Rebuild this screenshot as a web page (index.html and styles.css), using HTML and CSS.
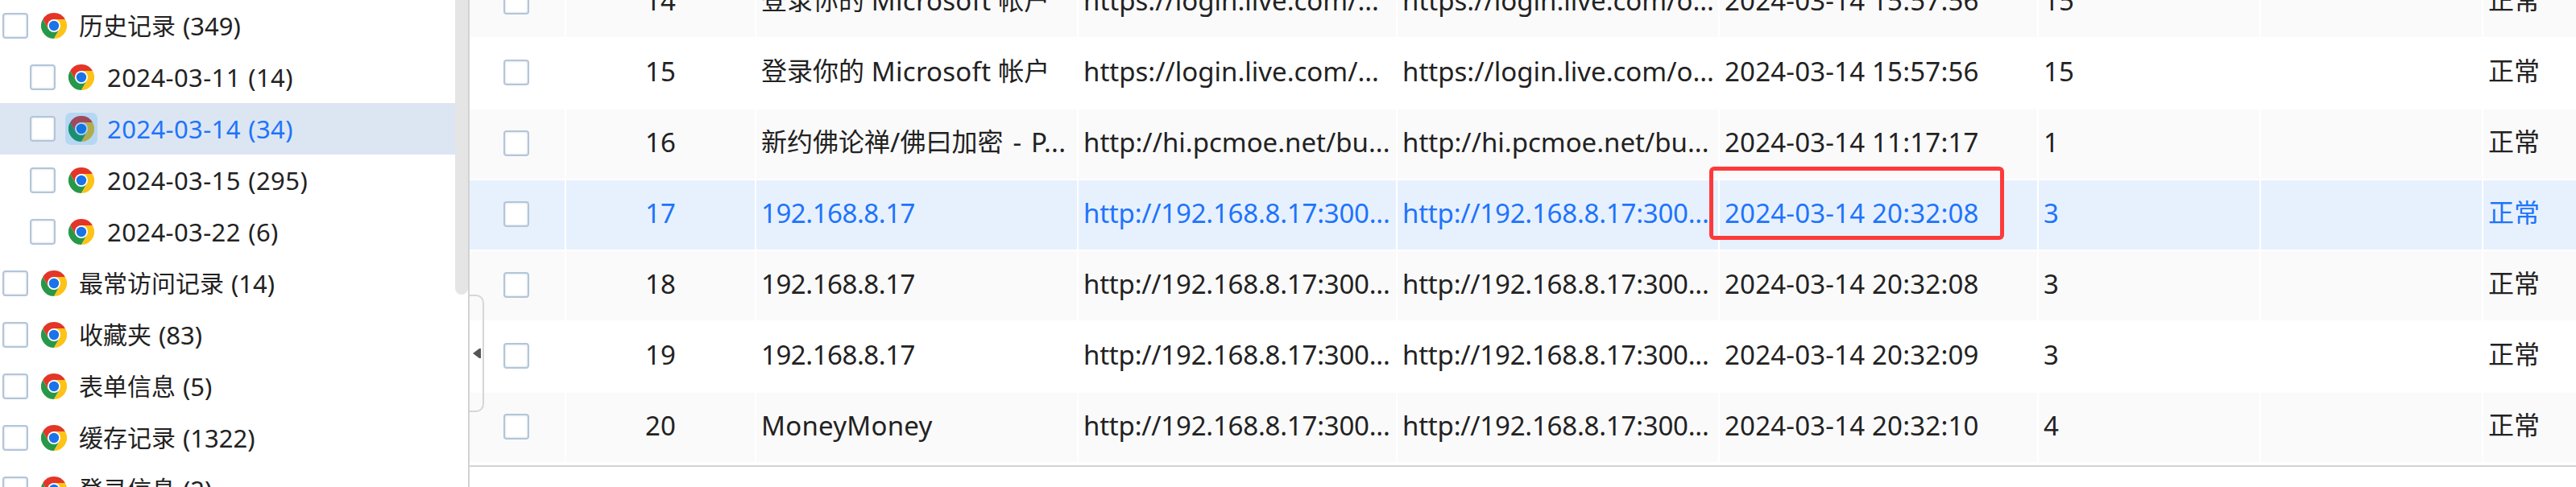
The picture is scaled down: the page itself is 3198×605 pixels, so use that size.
FILE: index.html
```html
<!DOCTYPE html>
<html lang="zh-CN">
<head>
<meta charset="utf-8">
<title>历史记录</title>
<link rel="stylesheet" href="styles.css">
</head>
<body>
<svg class="defs" aria-hidden="true">
  <symbol id="chrome" viewBox="-16 -16 32 32">
    <path fill="#e33629" d="M0-8H13.86A16 16 0 0 0-13.86-8L-6.93 4 0 0z"/>
    <path fill="#279847" transform="rotate(-120)" d="M0-8H13.86A16 16 0 0 0-13.86-8L-6.93 4 0 0z"/>
    <path fill="#fdc316" transform="rotate(120)" d="M0-8H13.86A16 16 0 0 0-13.86-8L-6.93 4 0 0z"/>
    <circle r="8" fill="#fff"/>
    <circle r="6.2" fill="#1a73e8"/>
  </symbol>
</svg>
<div class="app">
  <aside class="sidebar">
    <ul class="tree">
      <li class="node"><i class="check"></i><span class="logo"><svg><use href="#chrome"/></svg></span><span class="label"><span class="zh">历史记录</span> (349)</span></li>
      <li class="node child"><i class="check"></i><span class="logo"><svg><use href="#chrome"/></svg></span><span class="label">2024-03-11 (14)</span></li>
      <li class="node child selected"><i class="check"></i><span class="logo"><svg><use href="#chrome"/></svg></span><span class="label">2024-03-14 (34)</span></li>
      <li class="node child"><i class="check"></i><span class="logo"><svg><use href="#chrome"/></svg></span><span class="label">2024-03-15 (295)</span></li>
      <li class="node child"><i class="check"></i><span class="logo"><svg><use href="#chrome"/></svg></span><span class="label">2024-03-22 (6)</span></li>
      <li class="node"><i class="check"></i><span class="logo"><svg><use href="#chrome"/></svg></span><span class="label"><span class="zh">最常访问记录</span> (14)</span></li>
      <li class="node"><i class="check"></i><span class="logo"><svg><use href="#chrome"/></svg></span><span class="label"><span class="zh">收藏夹</span> (83)</span></li>
      <li class="node"><i class="check"></i><span class="logo"><svg><use href="#chrome"/></svg></span><span class="label"><span class="zh">表单信息</span> (5)</span></li>
      <li class="node"><i class="check"></i><span class="logo"><svg><use href="#chrome"/></svg></span><span class="label"><span class="zh">缓存记录</span> (1322)</span></li>
      <li class="node"><i class="check"></i><span class="logo"><svg><use href="#chrome"/></svg></span><span class="label"><span class="zh">登录信息</span> (2)</span></li>
    </ul>
    <div class="scroll"><div class="thumb"></div></div>
  </aside>
  <main class="content">
    <div class="grid">
      <div class="row odd"><div class="cell pick"><i class="check"></i></div><div class="cell num">14</div><div class="cell title"><span class="zh">登录你的</span> Microsoft <span class="zh">帐户</span></div><div class="cell url">https://login.live.com/...</div><div class="cell url">https://login.live.com/o...</div><div class="cell time">2024-03-14 15:57:56</div><div class="cell">15</div><div class="cell"></div><div class="cell"><span class="zh">正常</span></div></div>
      <div class="row"><div class="cell pick"><i class="check"></i></div><div class="cell num">15</div><div class="cell title"><span class="zh">登录你的</span> Microsoft <span class="zh">帐户</span></div><div class="cell url">https://login.live.com/...</div><div class="cell url">https://login.live.com/o...</div><div class="cell time">2024-03-14 15:57:56</div><div class="cell">15</div><div class="cell"></div><div class="cell"><span class="zh">正常</span></div></div>
      <div class="row odd"><div class="cell pick"><i class="check"></i></div><div class="cell num">16</div><div class="cell title long"><span class="zh">新约佛论禅</span>/<span class="zh">佛曰加密</span> - P...</div><div class="cell host">http://hi.pcmoe.net/bu...</div><div class="cell host">http://hi.pcmoe.net/bu...</div><div class="cell time">2024-03-14 11:17:17</div><div class="cell">1</div><div class="cell"></div><div class="cell"><span class="zh">正常</span></div></div>
      <div class="row active"><div class="cell pick"><i class="check"></i></div><div class="cell num">17</div><div class="cell ip">192.168.8.17</div><div class="cell port">http://192.168.8.17:300...</div><div class="cell port">http://192.168.8.17:300...</div><div class="cell time">2024-03-14 20:32:08<span class="marker"></span></div><div class="cell">3</div><div class="cell"></div><div class="cell"><span class="zh">正常</span></div></div>
      <div class="row odd"><div class="cell pick"><i class="check"></i></div><div class="cell num">18</div><div class="cell ip">192.168.8.17</div><div class="cell port">http://192.168.8.17:300...</div><div class="cell port">http://192.168.8.17:300...</div><div class="cell time">2024-03-14 20:32:08</div><div class="cell">3</div><div class="cell"></div><div class="cell"><span class="zh">正常</span></div></div>
      <div class="row"><div class="cell pick"><i class="check"></i></div><div class="cell num">19</div><div class="cell ip">192.168.8.17</div><div class="cell port">http://192.168.8.17:300...</div><div class="cell port">http://192.168.8.17:300...</div><div class="cell time">2024-03-14 20:32:09</div><div class="cell">3</div><div class="cell"></div><div class="cell"><span class="zh">正常</span></div></div>
      <div class="row odd"><div class="cell pick"><i class="check"></i></div><div class="cell num">20</div><div class="cell title">MoneyMoney</div><div class="cell port">http://192.168.8.17:300...</div><div class="cell port">http://192.168.8.17:300...</div><div class="cell time">2024-03-14 20:32:10</div><div class="cell">4</div><div class="cell"></div><div class="cell"><span class="zh">正常</span></div></div>
    </div>
    <div class="collapse"><svg viewBox="0 0 10 14"><path fill="#555" d="M10 1v12H8L0 7l8-6z"/></svg></div>
  </main>
</div>
</body>
</html>
```
FILE: styles.css
```css
* { box-sizing: border-box; }
body {
  margin: 0;
  background: #fff;
  color: #222;
  font-family: "Noto Sans", "Noto Sans CJK SC", sans-serif;
  overflow: hidden;
}
.defs { display: none; }
.app { display: flex; height: 605px; overflow: hidden; }

.check {
  display: block;
  flex: none;
  width: 32px;
  height: 32px;
  border: 2px solid #b3c5d8;
  border-radius: 4px;
  background: #fff;
  box-shadow: inset 0 0 2px 1px #e3eaf2;
}
.zh {
  font-family: "Noto Sans CJK SC", sans-serif;
  vertical-align: 1px;
  line-height: 1;
}

/* Sidebar tree */
.sidebar { display: flex; flex: none; width: 583px; border-right: 2px solid #d2d2d2; }
.tree { flex: 1; margin: 0; padding: 0; list-style: none; }
.node {
  display: flex;
  align-items: center;
  height: 64px;
  padding-left: 3px;
  font-size: 31px;
  letter-spacing: 0;
  word-spacing: 1px;
  line-height: 64px;
  white-space: pre;
}
.node.child { padding-left: 37px; letter-spacing: 0.4px; }
.node .zh { font-size: 30px; letter-spacing: 0; }
.logo {
  display: grid;
  place-items: center;
  width: 40px;
  height: 40px;
  margin: 0 11px 0 12px;
  border-radius: 7px;
}
.child .logo { margin-right: 12px; }
.logo svg { grid-area: 1 / 1; width: 32px; height: 32px; }
.selected { background: #dce6f2; color: #1e74fc; }
.selected .logo { background: #b5d7f4; }
.selected .logo::after {
  content: "";
  grid-area: 1 / 1;
  width: 32px;
  height: 32px;
  border-radius: 50%;
  background: rgba(0, 120, 215, .3);
}
.scroll { flex: none; width: 16px; }
.thumb { height: 366px; border-radius: 0 0 8px 8px; background: #e5e5e5; }

/* Record table */
.content { position: relative; flex: 1; min-width: 0; }
.grid { margin-top: -40px; padding-bottom: 2px; border-bottom: 2px solid #d3d3d3; }
.row {
  display: grid;
  grid-template-columns: 120px 236px 400px 396px 400px 396px 276px 276px 115px;
  height: 88px;
  border-bottom: 2px solid #fff;
  font-size: 33px;
  line-height: 82px;
}
.cell { min-width: 0; padding-left: 6px; border-right: 2px solid #fff; white-space: pre; }
.cell:last-child { border-right: 0; }
.odd .cell { background: #fafafa; }
.active { color: #1e74fc; }
.active .cell { background: #e7f1fe; }
.row .zh { font-size: 32px; letter-spacing: 0; }
.pick { padding: 26px 0 0 42px; }
.num { padding-left: 0; text-align: center; }
.title { letter-spacing: 0.25px; }
.title.long { word-spacing: 3px; }
.ip { letter-spacing: -0.45px; }
.port { letter-spacing: -0.22px; }
.time { position: relative; letter-spacing: 0.2px; }
.marker {
  position: absolute;
  left: -13px;
  top: -17px;
  z-index: 1;
  width: 366px;
  height: 91px;
  border: 5px solid #fd3a3a;
  border-radius: 6px;
}
.collapse {
  position: absolute;
  left: 0;
  top: 366px;
  display: flex;
  align-items: center;
  width: 18px;
  height: 146px;
  padding-left: 4px;
  border: 2px solid #d6d6d6;
  border-left: 0;
  border-radius: 0 10px 10px 0;
}
.collapse svg { width: 10px; height: 14px; }
```
